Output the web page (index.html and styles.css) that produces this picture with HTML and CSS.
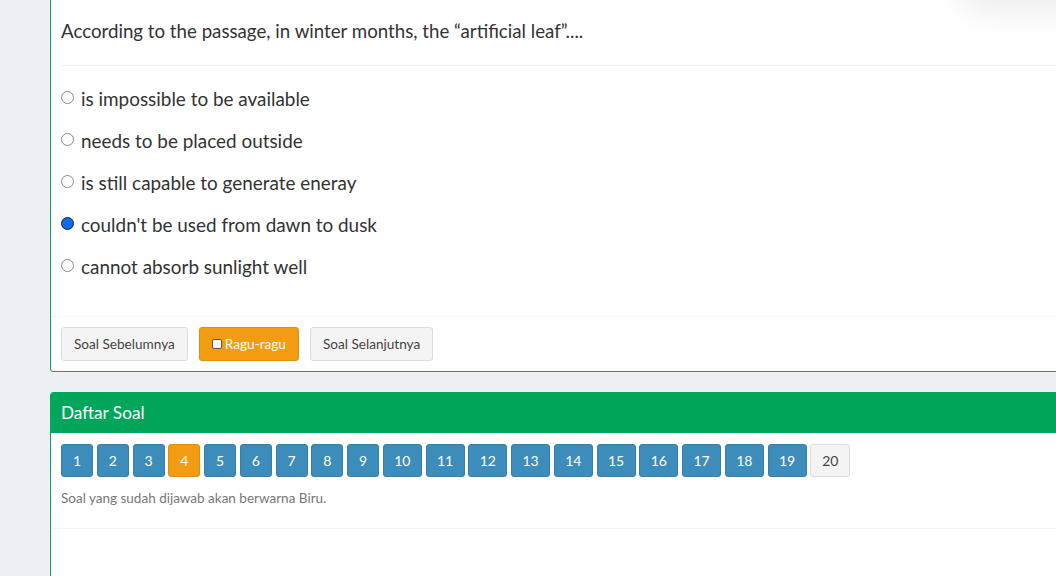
FILE: index.html
```html
<!DOCTYPE html>
<html lang="id">
<head>
<meta charset="utf-8">
<title>Ujian</title>
<link rel="stylesheet" href="styles.css">
</head>
<body>
<div class="topshadow"></div>
<main class="content">
  <section class="box box-question">
    <div class="question">According to the passage, in winter months, the “artificial leaf”....</div>
    <hr class="sep">
    <div class="options">
      <label class="option"><input type="radio" name="jawab" class="radio"><span>is impossible to be available</span></label>
      <label class="option"><input type="radio" name="jawab" class="radio"><span>needs to be placed outside</span></label>
      <label class="option"><input type="radio" name="jawab" class="radio"><span>is still capable to generate eneray</span></label>
      <label class="option"><input type="radio" name="jawab" class="radio" checked><span>couldn't be used from dawn to dusk</span></label>
      <label class="option"><input type="radio" name="jawab" class="radio"><span>cannot absorb sunlight well</span></label>
    </div>
    <div class="box-footer">
      <button class="btn btn-default">Soal Sebelumnya</button>
      <button class="btn btn-warning"><span class="chk"></span>Ragu-ragu</button>
      <button class="btn btn-default">Soal Selanjutnya</button>
    </div>
  </section>

  <section class="box box-list">
    <header class="box-header">Daftar Soal</header>
    <div class="box-body">
      <div class="numbers">
        <button class="btn btn-primary">1</button>
        <button class="btn btn-primary">2</button>
        <button class="btn btn-primary">3</button>
        <button class="btn btn-warning">4</button>
        <button class="btn btn-primary">5</button>
        <button class="btn btn-primary">6</button>
        <button class="btn btn-primary">7</button>
        <button class="btn btn-primary">8</button>
        <button class="btn btn-primary">9</button>
        <button class="btn btn-primary">10</button>
        <button class="btn btn-primary">11</button>
        <button class="btn btn-primary">12</button>
        <button class="btn btn-primary">13</button>
        <button class="btn btn-primary">14</button>
        <button class="btn btn-primary">15</button>
        <button class="btn btn-primary">16</button>
        <button class="btn btn-primary">17</button>
        <button class="btn btn-primary">18</button>
        <button class="btn btn-primary">19</button>
        <button class="btn btn-default">20</button>
      </div>
      <p class="hint">Soal yang sudah dijawab akan berwarna Biru.</p>
    </div>
    <div class="list-footer"></div>
  </section>
</main>
</body>
</html>
```

FILE: styles.css
```css
html, body {
  margin: 0;
  padding: 0;
  overflow: hidden;
}
body {
  background: #ecf0f5;
  font-family: Lato, "Noto Sans", sans-serif;
  color: #333;
  height: 576px;
  position: relative;
}
.topshadow {
  position: absolute;
  top: -40px;
  right: -30px;
  width: 120px;
  height: 40px;
  border-radius: 40px;
  box-shadow: 0 0 40px 6px rgba(0, 0, 0, 0.10);
  z-index: 2;
}
.content {
  padding-left: 50px;
  margin-top: -20px;
}
.box {
  width: 1030px;
  background: #fff;
  border: 1px solid #00a65a;
  border-radius: 3px;
  box-sizing: border-box;
}
.question {
  padding: 38px 10px 0;
  font-size: 18.7px;
  line-height: 25px;
  color: #333;
}
.sep {
  border: 0;
  border-top: 1px solid #eee;
  margin: 21px 0 0 10px;
}
.options {
  display: flex;
  flex-direction: column;
  padding: 10px 10px 30px;
}
.option {
  display: flex;
  align-items: center;
  height: 42px;
  font-size: 18.9px;
  color: #333;
  gap: 7px;
}
.option span {
  padding-top: 2px;
}
.radio {
  appearance: none;
  -webkit-appearance: none;
  margin: 0;
  width: 13px;
  height: 13px;
  border-radius: 50%;
  border: 1px solid #8a8a8a;
  background: #fff;
  box-sizing: border-box;
}
.radio:checked {
  border: 1px solid #222;
  background: #0b6bf2;
}
.box-footer {
  border-top: 1px solid #f4f4f4;
  padding: 10px;
  display: flex;
  gap: 11px;
}
.btn {
  font-family: inherit;
  font-size: 14px;
  line-height: 20px;
  padding: 6px 12px;
  border: 1px solid transparent;
  border-radius: 3px;
  cursor: pointer;
  display: inline-flex;
  align-items: center;
  box-sizing: border-box;
  height: 34px;
}
.box-footer .btn {
  font-size: 13.6px;
}
.btn-default {
  background: #f4f4f4;
  border-color: #ddd;
  color: #444;
}
.btn-warning {
  background: #f39c12;
  border-color: #e08e0b;
  color: #fff;
}
.btn-primary {
  background: #3c8dbc;
  border-color: #367fa9;
  color: #fff;
}
.chk {
  width: 8px;
  height: 8px;
  border: 1px solid #555;
  border-radius: 2px;
  background: #fff;
  margin-right: 3px;
}
.box-list {
  margin-top: 20px;
  border-radius: 3px;
  overflow: hidden;
}
.box-header {
  background: #00a65a;
  color: #fff;
  font-size: 17.2px;
  line-height: 20px;
  padding: 10px 10px;
}
.box-body {
  padding: 11px 10px 0;
}
.numbers {
  display: flex;
  gap: 3.75px;
}
.numbers .btn {
  justify-content: center;
  padding: 6px 0;
  width: 32px;
  height: 33px;
}
.numbers .btn:nth-child(n+10) {
  width: 39px;
}
.numbers .btn:last-child {
  width: 40px;
}
.hint {
  margin: 12px 0 0;
  font-size: 13.5px;
  line-height: 18px;
  color: #777;
  padding-bottom: 21px;
}
.list-footer {
  border-top: 1px solid #f4f4f4;
  height: 60px;
}
```
